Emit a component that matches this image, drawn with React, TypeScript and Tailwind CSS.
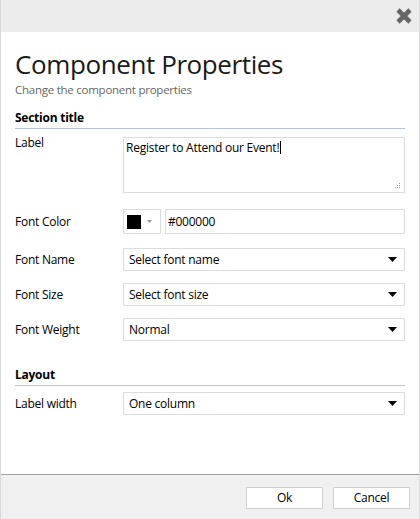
import React from "react";

const Caret = () => (
  <svg width="9" height="5" viewBox="0 0 9 5" className="shrink-0">
    <path d="M0 0 L9 0 L4.5 5 Z" fill="#000" />
  </svg>
);

function Select({ text }: { text: string }) {
  return (
    <div className="flex h-[23px] flex-1 items-center justify-between border border-[#dcdcdc] bg-white pl-[5px] pr-[7px] text-[12px] text-black">
      <span>{text}</span>
      <Caret />
    </div>
  );
}

function Row({ label, children, className = "" }: { label: string; children: React.ReactNode; className?: string }) {
  return (
    <div className={"flex items-center " + className}>
      <div className="w-[108px] shrink-0 text-[12px] text-black">{label}</div>
      {children}
    </div>
  );
}

export default function App() {
  return (
    <div
      className="flex h-[519px] w-[420px] flex-col overflow-hidden border-x border-[#dadada] bg-white tracking-[-0.25px]"
      style={{ fontFamily: '"Open Sans", "Noto Sans", sans-serif' }}
    >
      <div className="flex h-[32px] shrink-0 items-center justify-end bg-[#ececec] pr-[6px]">
        <svg width="18" height="18" viewBox="0 0 18 18">
          <path d="M3 3 L15 15 M15 3 L3 15" stroke="#666" strokeWidth="4.6" strokeLinecap="butt" />
        </svg>
      </div>
      <div className="flex flex-1 flex-col px-[14px]">
        <div className="mt-[14px] text-[26px] leading-[36px] tracking-[-0.4px] text-[#1a1a1a]">Component Properties</div>
        <div className="mt-0 text-[11.5px] leading-[16px] text-[#666]">Change the component properties</div>
        <div className="mt-[12px] border-b border-[#b9c3d6] pb-[2px] text-[12px] font-bold leading-[16px] text-black">Section title</div>
        <div className="mt-[8px] flex items-start">
          <div className="-mt-[3px] w-[108px] shrink-0 text-[12px] text-black">Label</div>
          <div className="relative h-[56px] flex-1 border border-[#dcdcdc] bg-white px-[2px] pt-[1px] text-[12px] text-black">
            Register to Attend our Event!<span className="ml-[1px] inline-block h-[13px] w-px translate-y-[2px] bg-black" />
            <svg width="6" height="6" viewBox="0 0 6 6" className="absolute bottom-[3px] right-[3px]">
              <rect x="4" y="0" width="1" height="1" fill="#999" />
              <rect x="2" y="2" width="1" height="1" fill="#999" />
              <rect x="4" y="2" width="1" height="1" fill="#999" />
              <rect x="0" y="4" width="1" height="1" fill="#999" />
              <rect x="2" y="4" width="1" height="1" fill="#999" />
              <rect x="4" y="4" width="1" height="1" fill="#999" />
            </svg>
          </div>
        </div>
        <Row label="Font Color" className="mt-[16px]">
          <div className="flex h-[25px] w-[38px] shrink-0 items-center gap-[6px] border border-[#dcdcdc] bg-white pl-[3px]">
            <div className="h-[14px] w-[14px] bg-black" />
            <svg width="5" height="3" viewBox="0 0 5 3">
              <path d="M0 0 L5 0 L2.5 3 Z" fill="#999" />
            </svg>
          </div>
          <div className="ml-[4px] flex h-[25px] flex-1 items-center border border-[#dcdcdc] bg-white pl-[2px] text-[12px] text-black">#000000</div>
        </Row>
        <Row label="Font Name" className="mt-[14px]">
          <Select text="Select font name" />
        </Row>
        <Row label="Font Size" className="mt-[12px]">
          <Select text="Select font size" />
        </Row>
        <Row label="Font Weight" className="mt-[12px]">
          <Select text="Normal" />
        </Row>
        <div className="mt-[26px] border-b border-[#b9c3d6] pb-[2px] text-[12px] font-bold leading-[16px] text-black">Layout</div>
        <Row label="Label width" className="mt-[6px]">
          <Select text="One column" />
        </Row>
      </div>
      <div className="flex h-[45px] shrink-0 items-center justify-end gap-[10px] border-t border-[#a0a0a0] bg-[#f0f0f0] pr-[9px]">
        <button className="mt-[2px] h-[22px] w-[77px] border border-[#cfcfcf] bg-white text-[12px] text-black">Ok</button>
        <button className="mt-[2px] h-[22px] w-[77px] border border-[#cfcfcf] bg-white text-[12px] text-black">Cancel</button>
      </div>
    </div>
  );
}
